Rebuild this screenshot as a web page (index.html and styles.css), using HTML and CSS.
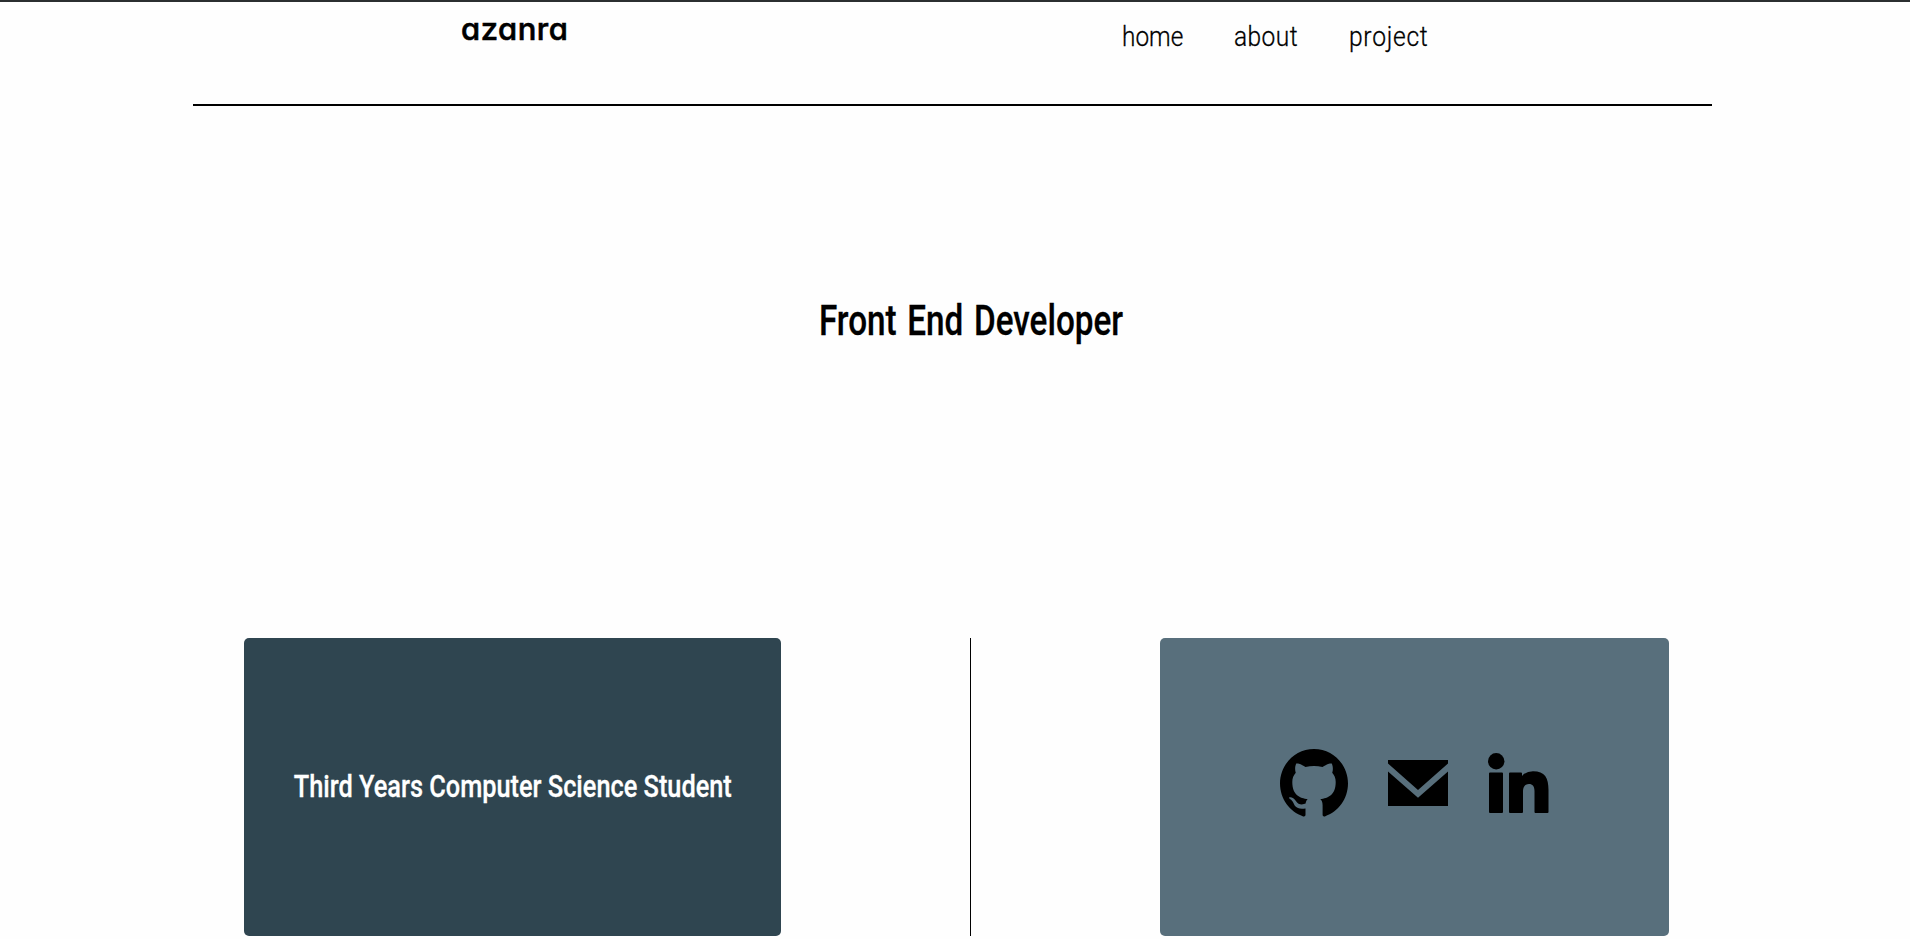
FILE: index.html
```html
<!DOCTYPE html>
<html lang="en">
<head>
<meta charset="utf-8">
<title>azanra</title>
<link rel="stylesheet" href="styles.css">
</head>
<body>
<header class="header">
  <a class="logo"><span class="logo-text">azanra</span></a>
  <nav class="nav">
    <a class="nav-home"><span class="nav-text">home</span></a>
    <a class="nav-about"><span class="nav-text">about</span></a>
    <a class="nav-project"><span class="nav-text">project</span></a>
  </nav>
</header>
<main>
  <section class="hero"><h1 class="title">Front End Developer</h1></section>
  <section class="cards">
    <div class="card intro"><h2 class="subtitle">Third Years Computer Science Student</h2></div>
    <div class="divider"></div>
    <div class="card social">
      <svg class="github" viewBox="0 0 68 68"><path fill-rule="evenodd" d="M34 0C15.200 0 0 15.400 0 34.600C0 49.900 9.700 62.900 23.200 67.400C24.900 67.800 25.500 66.700 25.500 65.800V59.400C16.100 61.400 14.100 55.300 14.100 55.300C12.500 51.300 10.300 50.300 10.300 50.300C7.200 48.200 10.500 48.200 10.500 48.200C13.900 48.500 15.700 51.800 15.700 51.800C18.700 57 23.600 55.500 25.600 54.600C25.900 52.400 26.800 50.900 27.700 50C20.200 49.100 12.300 46.200 12.300 32.900C12.300 29.200 13.600 26.100 15.800 23.700C15.500 22.800 14.300 19.300 16.200 14.500C16.200 14.500 19 13.600 25.500 18C31 16.500 37 16.500 42.500 18C49 13.600 51.800 14.500 51.800 14.500C53.700 19.300 52.500 22.800 52.200 23.700C54.400 26.100 55.700 29.200 55.700 32.900C55.700 46.200 47.800 49.100 40.300 50C41.500 51.100 42.600 53.100 42.600 56.300V65.800C42.600 66.700 43.200 67.800 44.900 67.400C58.300 62.900 68 49.900 68 34.600C68 15.400 52.800 0 34 0Z"/></svg>
      <svg class="mail" viewBox="0 0 60 46"><path d="M0 0H60V3.500L30 30L0 3.500ZM0 11.500L30 37.700L60 11.500V46H0Z"/></svg>
      <svg class="linkedin" viewBox="0 0 61 61"><circle cx="8.200" cy="8.200" r="8.200"/><path d="M2 19.500H14Q15 19.500 15 20.500V59Q15 60 14 60H2Q1 60 1 59V20.500Q1 19.500 2 19.500ZM22 19.500H33Q34 19.500 34 20.500V23Q38 18.300 45 18.300C57 18.300 60.500 25 60.500 37V59Q60.500 60 59.500 60H47.500Q46.500 60 46.500 59V38C46.500 33.500 44.500 31 41 31C37 31 35 34 35 38V59Q35 60 34 60H22Q21 60 21 59V20.500Q21 19.500 22 19.500Z"/></svg>
    </div>
  </section>
</main>
</body>
</html>
```
FILE: styles.css
```css
* { box-sizing: border-box; }
body { margin: 0; height: 939px; overflow: hidden; background: #fefefe; color: #000; border-top: 2px solid #2b2f30; font-family: Roboto, sans-serif; }
.header { display: flex; width: 1519px; height: 104px; margin-left: 193px; border-bottom: 2px solid #000; }
.logo { width: 929px; padding: 8px 0 0 268px; }
.logo-text { display: inline-block; font: 500 31px/38px Inter, sans-serif; font-feature-settings: "cv11"; letter-spacing: 0.5px; -webkit-text-stroke: 0.6px #000; }
.nav { display: flex; padding-top: 17px; font-size: 28px; font-weight: 300; line-height: 36px; }
.nav-home { width: 112px; }
.nav-about { width: 115px; }
.nav-text { display: inline-block; transform: scaleX(0.87); transform-origin: 0 0; -webkit-text-stroke: 0.3px #000; }
.nav-about .nav-text { transform: scaleX(0.875); letter-spacing: 0.5px; }
.nav-project .nav-text { transform: scaleX(0.88); letter-spacing: 0.8px; }
.hero { display: flex; justify-content: center; height: 532px; padding: 190px 0 0 31px; }
.title { margin: 0; height: 50px; font-size: 42px; font-weight: 500; line-height: 50px; white-space: nowrap; word-spacing: 3px; transform: scaleX(0.792); -webkit-text-stroke: 0.3px #000; }
.cards { display: flex; height: 298px; margin-left: 244px; }
.card { display: flex; align-items: center; border-radius: 5px; }
.intro { width: 537px; justify-content: center; background: #2f4550; }
.subtitle { margin: 0; padding-left: 2px; color: #fff; font-size: 31px; font-weight: 500; line-height: 40px; white-space: nowrap; transform: scaleX(0.817); -webkit-text-stroke: 0.3px #fff; }
.divider { width: 1px; margin: 0 189px; background: #000; }
.social { width: 509px; padding-left: 120px; align-items: flex-start; background: #586f7c; }
.github { width: 68px; height: 68px; margin: 111px 40px 0 0; }
.mail { width: 60px; height: 46px; margin: 122px 40px 0 0; }
.linkedin { width: 61px; height: 61px; margin-top: 115px; }
```
